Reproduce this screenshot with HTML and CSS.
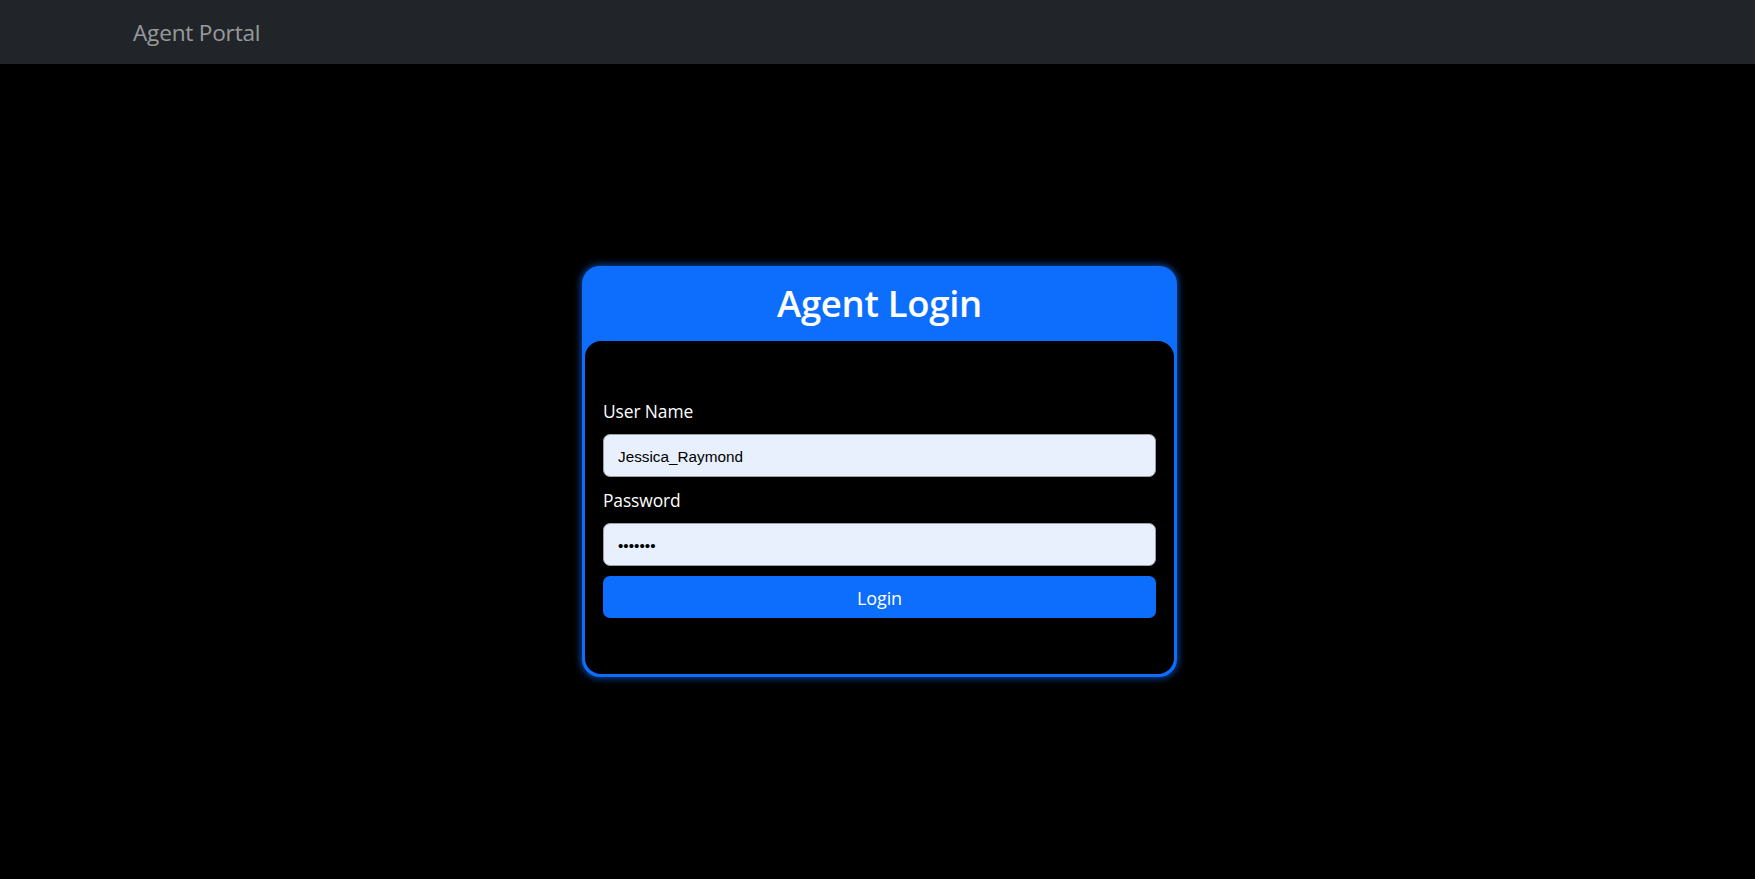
FILE: index.html
```html
<!DOCTYPE html>
<html lang="en">
<head>
<meta charset="utf-8">
<title>Agent Portal</title>
<link rel="stylesheet" href="styles.css">
</head>
<body>
<nav class="navbar">
  <a class="brand" href="#">Agent Portal</a>
</nav>
<main class="page">
  <section class="card">
    <h2 class="card-title">Agent Login</h2>
    <form class="panel">
      <label class="label" for="user">User Name</label>
      <input class="field" id="user" type="text" value="Jessica_Raymond">
      <label class="label label-pw" for="pw">Password</label>
      <input class="field" id="pw" type="password" value="1234567">
      <button class="btn" type="button">Login</button>
    </form>
  </section>
</main>
</body>
</html>
```

FILE: styles.css
```css
* { box-sizing: border-box; }
html, body { margin: 0; padding: 0; }
body {
  background: #000;
  font-family: "Open Sans", "Noto Sans", sans-serif;
  color: #fff;
  min-height: 879px;
}
.navbar {
  height: 64px;
  background: #212529;
  display: flex;
  align-items: center;
  padding-left: 133px;
}
.brand {
  font-size: 22.6px;
  color: rgba(255,255,255,0.55);
  text-decoration: none;
  letter-spacing: -0.2px;
  line-height: 1;
  margin-top: 3px;
}
.page {
  display: flex;
  justify-content: center;
  padding-top: 202px;
  padding-left: 4px;
}
.card {
  width: 595px;
  background: #0d6efd;
  border-radius: 18px;
  padding: 0 3px 3px;
  box-shadow: 0 0 6px 2px rgba(13,110,253,0.55);
  display: flex;
  flex-direction: column;
}
.card-title {
  margin: 0;
  height: 75px;
  display: flex;
  align-items: center;
  justify-content: center;
  font-size: 36.5px;
  font-weight: 600;
  letter-spacing: -0.3px;
  color: #fff;
  padding-bottom: 1px;
}
.panel {
  background: #000;
  border-radius: 16px;
  padding: 57px 18px 56px;
  display: flex;
  flex-direction: column;
  margin: 0;
}
.label {
  font-size: 17.4px;
  line-height: 27px;
  color: #fff;
  margin-bottom: 9px;
  letter-spacing: -0.1px;
}
.label-pw { margin-top: 10px; }
.field {
  height: 43px;
  width: 100%;
  background: #e8f0fe;
  border: 1px solid #9aa0a6;
  border-radius: 7px;
  padding: 2px 14px 0;
  font-family: "Liberation Sans", Arial, sans-serif;
  font-size: 15.3px;
  color: #000;
  outline: none;
}
.btn {
  margin-top: 10px;
  height: 42px;
  width: 100%;
  background: #0d6efd;
  border: none;
  border-radius: 7px;
  color: #fff;
  font-family: "Open Sans", "Noto Sans", sans-serif;
  font-size: 18px;
  letter-spacing: -0.1px;
  padding-top: 2px;
}
```
